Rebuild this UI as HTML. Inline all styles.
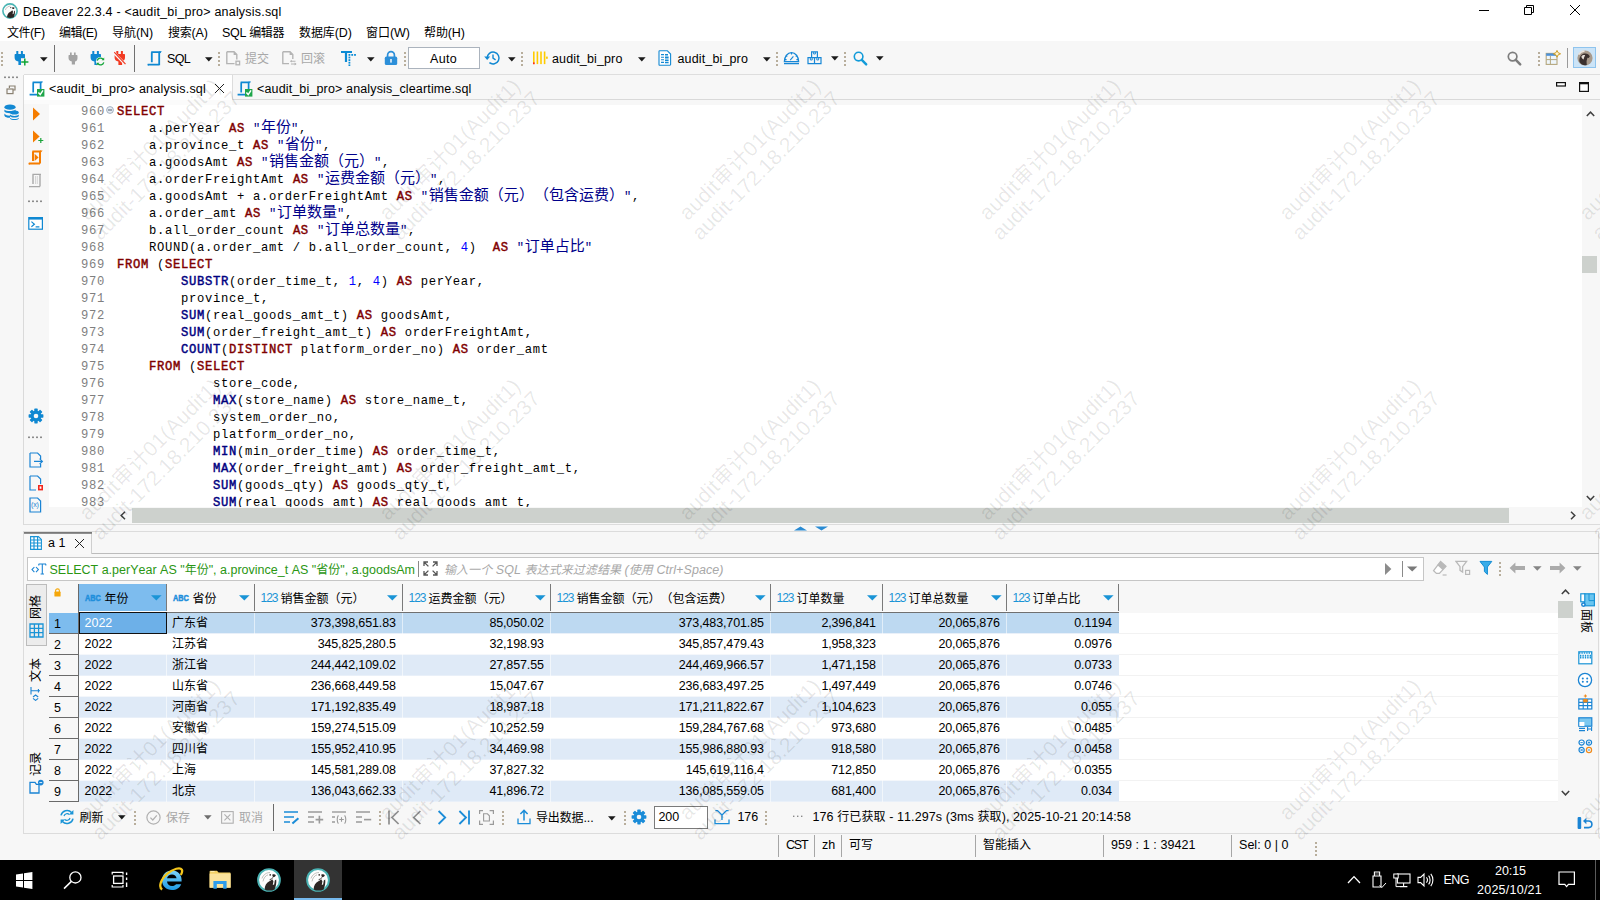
<!DOCTYPE html><html lang="zh"><head><meta charset="utf-8"><title>DBeaver 22.3.4 - &lt;audit_bi_pro&gt; analysis.sql</title><style>
*{margin:0;padding:0;box-sizing:border-box}
html,body{width:1600px;height:900px;overflow:hidden;background:#f7f7f7}
body{font-family:"Liberation Sans","Noto Sans CJK SC",sans-serif;font-size:12.5px;color:#000;position:relative;text-spacing-trim:space-all;font-kerning:none}
.c{font-size:12px}
#r{position:absolute;left:0;top:0;width:1600px;height:900px;overflow:hidden}
#r div,#r span,#r svg{position:absolute}
#r span{white-space:pre;line-height:16px;height:16px}
#r span span,#r span b,#r span i,#r span u,#r span s,#r span em{position:static}
.ui{font-size:12px}
.g{color:#a0a0a0}
.code{font-family:"Liberation Mono","Noto Sans CJK SC",monospace;font-size:12.2px;letter-spacing:0.68px;line-height:17px;height:17px;color:#000}
#r .code{line-height:17px;height:17px}
.code b{font-weight:normal;color:#7f0000;-webkit-text-stroke:0.45px #7f0000}
.code i{font-style:normal;font-weight:normal;color:#000080;-webkit-text-stroke:0.45px #000080}
.code u{text-decoration:none;color:#0000ff}
.code s{text-decoration:none;color:#000080}
.code em{font-style:normal;font-family:"Noto Sans CJK SC",sans-serif;font-size:15px;line-height:10px;position:static;font-weight:normal;color:#00008a}
.code em{letter-spacing:0}
.code em.p{letter-spacing:0}
.ln{font-family:"Liberation Mono",monospace;font-size:12.2px;letter-spacing:0.68px;color:#7f7f7f;text-align:right;width:40px}
#r .ln{line-height:17px;height:17px}
.cell{font-size:12.5px}
.wm{font-family:"Liberation Sans","Noto Sans CJK SC",sans-serif;font-size:21px;color:rgba(0,0,0,0.095);width:260px;height:45px;text-align:center;white-space:pre;transform:rotate(-45deg)}
.wm p{line-height:22.5px;height:22.5px}
</style></head><body><div id="r">
<div style="left:0px;top:0px;width:1600px;height:41px;background:#fff"></div>
<div style="left:0px;top:41px;width:1600px;height:34px;background:#f7f7f7"></div>
<div style="left:24px;top:74px;width:1576px;height:1px;background:#dedede"></div>
<div style="left:0px;top:75px;width:1600px;height:785px;background:#f7f7f7"></div>
<div style="left:24px;top:75px;width:1576px;height:25px;background:#f7f7f7"></div>
<div style="left:24px;top:99px;width:1576px;height:1px;background:#d9d9d9"></div>
<div style="left:23px;top:75px;width:1px;height:455px;background:#dadada"></div>
<svg style="left:2px;top:3px;" width="16" height="16" viewBox="0 0 16 16"><circle cx="8" cy="8" r="7.1" fill="#fdfdfd" stroke="#49b4b3" stroke-width="1.6"/><path d="M5 14.2C5.2 11.6 6.2 10 8 9C9 8.4 9.8 7.8 10.2 7.2L11 8.6L10.6 11.2L11.6 10.8L12 8.2L12.8 7.6C13.2 9.8 12.8 12.4 11.8 14.2C9.8 15.2 7 15.2 5 14.2Z" fill="#2c2624"/><path d="M10.2 4.4C11 4 12.2 4.2 12.6 4.8C12.4 5.6 11.6 6.2 10.8 6C10.2 5.6 10 5 10.2 4.4Z" fill="#2c2624"/><circle cx="8.8" cy="4.6" r="0.6" fill="#2c2624"/><path d="M3.4 7C4.2 4.4 6.4 3 8.6 3" fill="none" stroke="#b9b4b0" stroke-width="0.8"/></svg>
<span style="left:23px;top:4px;letter-spacing:0.205px;">DBeaver 22.3.4 - &lt;audit_bi_pro&gt; analysis.sql</span>
<svg style="left:1478px;top:4px;" width="12" height="12" viewBox="0 0 12 12"><path d="M1 6.5H11" stroke="#000" stroke-width="1"/></svg>
<svg style="left:1523px;top:4px;" width="12" height="12" viewBox="0 0 12 12"><path d="M1.5 3.5H8.5V10.5H1.5Z M3.5 3.5V1.5H10.5V8.5H8.5" fill="none" stroke="#000" stroke-width="1"/></svg>
<svg style="left:1569px;top:4px;" width="12" height="12" viewBox="0 0 12 12"><path d="M1 1L11 11M11 1L1 11" stroke="#000" stroke-width="1"/></svg>
<span style="left:7px;top:25px;letter-spacing:-0.477px;"><span class="c">文件</span>(F)</span>
<span style="left:59px;top:25px;letter-spacing:-0.497px;"><span class="c">编辑</span>(E)</span>
<span style="left:112px;top:25px;letter-spacing:-0.035px;"><span class="c">导航</span>(N)</span>
<span style="left:168px;top:25px;letter-spacing:-0.217px;"><span class="c">搜索</span>(A)</span>
<span style="left:222px;top:25px;letter-spacing:-0.331px;">SQL <span class="c">编辑器</span></span>
<span style="left:299px;top:25px;letter-spacing:-0.096px;"><span class="c">数据库</span>(D)</span>
<span style="left:366px;top:25px;letter-spacing:-0.068px;"><span class="c">窗口</span>(W)</span>
<span style="left:424px;top:25px;letter-spacing:-0.115px;"><span class="c">帮助</span>(H)</span>
<svg style="left:1px;top:51px;" width="2" height="16" viewBox="0 0 2 16"><rect x="0" y="1" width="2" height="2" fill="#b8ae9c"/><rect x="0" y="5" width="2" height="2" fill="#b8ae9c"/><rect x="0" y="9" width="2" height="2" fill="#b8ae9c"/><rect x="0" y="13" width="2" height="2" fill="#b8ae9c"/></svg>
<svg style="left:14px;top:51px;" width="16" height="16" viewBox="0 0 16 16"><path d="M2.3 0H4.3V3H6.9V0H8.9V3H10.3C10.8 3 11 3.3 11 3.8V6.6C11 8.6 9.9 10 8.1 10.6V14H4.4V10.6C1.9 10 0.6 8.4 0.6 6.4V3.8C0.6 3.3 0.8 3 1.3 3H2.3Z" fill="#0f88d2"/><path d="M7 7.2H14.5V14.8H7Z" fill="#f7f7f7"/><path d="M10.8 7.4V14.6M7.2 11H14.4" stroke="#10a637" stroke-width="1.5"/></svg>
<svg style="left:40px;top:57px;" width="8" height="5" viewBox="0 0 8 5"><path d="M0 0.3H7.6L3.8 4.6Z" fill="#1a1a1a"/></svg>
<div style="left:54px;top:45px;width:1px;height:27px;background:#707070"></div>
<svg style="left:68px;top:52px;" width="10" height="13" viewBox="0 0 11.6 14"><path d="M2.3 0H4.3V3H6.9V0H8.9V3H10.3C10.8 3 11 3.3 11 3.8V6.6C11 8.6 9.9 10 8.1 10.6V14H4.4V10.6C1.9 10 0.6 8.4 0.6 6.4V3.8C0.6 3.3 0.8 3 1.3 3H2.3Z" fill="#a3a3a3"/></svg>
<svg style="left:90px;top:51px;" width="16" height="16" viewBox="0 0 16 16"><path d="M2.3 0H4.3V3H6.9V0H8.9V3H10.3C10.8 3 11 3.3 11 3.8V6.6C11 8.6 9.9 10 8.1 10.6V14H4.4V10.6C1.9 10 0.6 8.4 0.6 6.4V3.8C0.6 3.3 0.8 3 1.3 3H2.3Z" fill="#0f88d2"/><circle cx="10.5" cy="10.5" r="4.6" fill="#f7f7f7"/><path d="M7.2 9.6A3.4 3.4 0 0 1 13 8.2M13.8 11.4A3.4 3.4 0 0 1 8 12.8" fill="none" stroke="#12a538" stroke-width="1.3"/><path d="M14.2 6.6V9.2H11.6ZM6.8 14.4V11.8H9.4Z" fill="#12a538"/></svg>
<svg style="left:114px;top:51px;" width="16" height="16" viewBox="0 0 16 16"><path d="M2.3 0H4.3V3H6.9V0H8.9V3H10.3C10.8 3 11 3.3 11 3.8V6.6C11 8.6 9.9 10 8.1 10.6V14H4.4V10.6C1.9 10 0.6 8.4 0.6 6.4V3.8C0.6 3.3 0.8 3 1.3 3H2.3Z" fill="#f23a22"/><path d="M-0.5 1.5L12 14" stroke="#f7f7f7" stroke-width="2.6"/><path d="M0.2 1.2L11.5 13.2" stroke="#f23a22" stroke-width="1.2"/></svg>
<div style="left:134px;top:45px;width:1px;height:27px;background:#707070"></div>
<svg style="left:147px;top:51px;" width="16" height="16" viewBox="0 0 16 16"><path d="M4.2 1.2H13.6M12.2 1.2V14.2M4.8 1.2V11.2M1 13.6H12.2" fill="none" stroke="#0f88d2" stroke-width="1.8"/><path d="M12 0.3H14.8L13.4 2.2Z M0.4 12.6L2 14.6H0.6Z" fill="#0f88d2"/></svg>
<span style="left:167px;top:51px;letter-spacing:-0.672px;">SQL</span>
<svg style="left:205px;top:57px;" width="8" height="5" viewBox="0 0 8 5"><path d="M0 0.3H7.6L3.8 4.6Z" fill="#1a1a1a"/></svg>
<svg style="left:218px;top:51px;" width="2" height="16" viewBox="0 0 2 16"><rect x="0" y="1" width="2" height="2" fill="#b8ae9c"/><rect x="0" y="5" width="2" height="2" fill="#b8ae9c"/><rect x="0" y="9" width="2" height="2" fill="#b8ae9c"/><rect x="0" y="13" width="2" height="2" fill="#b8ae9c"/></svg>
<svg style="left:226px;top:51px;" width="16" height="16" viewBox="0 0 16 16"><path d="M0.8 0.8H8L10.8 3.6V8.5M0.8 0.8V12.6H8.5" fill="none" stroke="#b4b4b4" stroke-width="1.4"/><path d="M7.6 0.6V4H11Z" fill="#b4b4b4"/><rect x="10" y="10.2" width="3.6" height="3.6" fill="none" stroke="#b4b4b4" stroke-width="1.3"/></svg>
<span style="left:245px;top:51px;letter-spacing:-0.008px;color:#a8a8a8"><span class="c">提交</span></span>
<svg style="left:282px;top:51px;" width="16" height="16" viewBox="0 0 16 16"><path d="M0.8 0.8H8L10.8 3.6V8M0.8 0.8V12.6H7" fill="none" stroke="#b4b4b4" stroke-width="1.4"/><path d="M7.6 0.6V4H11Z" fill="#b4b4b4"/><path d="M8.5 10.2H13.5M9 13H14" stroke="#b4b4b4" stroke-width="1.1"/><path d="M9.8 8.8L8 10.2L9.8 11.6ZM12.6 11.6L14.6 13L12.6 14.4Z" fill="#b4b4b4"/></svg>
<span style="left:301px;top:51px;letter-spacing:-0.008px;color:#a8a8a8"><span class="c">回滚</span></span>
<svg style="left:341px;top:50px;" width="16" height="16" viewBox="0 0 16 16"><path d="M0 2H11M5 2V12" stroke="#0c8bd5" stroke-width="2.2" fill="none"/><rect x="7.5" y="4" width="1.8" height="1.8" fill="#0c8bd5"/><rect x="10.3" y="4" width="1.8" height="1.8" fill="#0c8bd5"/><rect x="13.1" y="4" width="1.8" height="1.8" fill="#0c8bd5"/><rect x="7.5" y="6.6" width="1.8" height="1.8" fill="#0c8bd5"/><rect x="7.5" y="9.2" width="1.8" height="1.8" fill="#0c8bd5"/><rect x="7.5" y="11.8" width="1.8" height="1.8" fill="#0c8bd5"/><rect x="7.5" y="14.4" width="1.8" height="1.8" fill="#0c8bd5"/></svg>
<svg style="left:367px;top:57px;" width="8" height="5" viewBox="0 0 8 5"><path d="M0 0.3H7.6L3.8 4.6Z" fill="#1a1a1a"/></svg>
<svg style="left:384px;top:50px;" width="14" height="16" viewBox="0 0 14 16"><path d="M3.6 7V5A3.4 3.4 0 0 1 10.4 5V7" fill="none" stroke="#2c8fd9" stroke-width="1.7"/><rect x="0.8" y="6.6" width="12.4" height="8.4" rx="1.6" fill="#2c8fd9"/><rect x="6.2" y="9" width="1.6" height="3.6" fill="#e8f2fb"/></svg>
<svg style="left:404px;top:51px;" width="2" height="16" viewBox="0 0 2 16"><rect x="0" y="1" width="2" height="2" fill="#b8ae9c"/><rect x="0" y="5" width="2" height="2" fill="#b8ae9c"/><rect x="0" y="9" width="2" height="2" fill="#b8ae9c"/><rect x="0" y="13" width="2" height="2" fill="#b8ae9c"/></svg>
<div style="left:408px;top:47px;width:72px;height:22px;background:#fff;border:1px solid #abb3bd"></div>
<span style="left:430px;top:51px;letter-spacing:0.320px;">Auto</span>
<svg style="left:484px;top:50px;" width="17" height="16" viewBox="0 0 17 16"><path d="M3.2 8A5.9 5.9 0 1 1 5.4 12.6" fill="none" stroke="#1088d2" stroke-width="1.5"/><path d="M0.2 6.6H6.2L3.2 10Z" fill="#1088d2"/><path d="M9 4.4V8.2L11.6 9.8" fill="none" stroke="#1088d2" stroke-width="1.4"/></svg>
<svg style="left:508px;top:57px;" width="8" height="5" viewBox="0 0 8 5"><path d="M0 0.3H7.6L3.8 4.6Z" fill="#1a1a1a"/></svg>
<svg style="left:521px;top:51px;" width="2" height="16" viewBox="0 0 2 16"><rect x="0" y="1" width="2" height="2" fill="#b8ae9c"/><rect x="0" y="5" width="2" height="2" fill="#b8ae9c"/><rect x="0" y="9" width="2" height="2" fill="#b8ae9c"/><rect x="0" y="13" width="2" height="2" fill="#b8ae9c"/></svg>
<svg style="left:533px;top:51px;" width="16" height="14" viewBox="0 0 16 14"><rect x="0" y="0.5" width="1.6" height="12.6" fill="#ffcc00"/><rect x="3.6" y="0.5" width="1.6" height="12.6" fill="#ffcc00"/><rect x="7.2" y="0.5" width="1.6" height="12.6" fill="#ffcc00"/><rect x="10.8" y="0.5" width="1.6" height="12.6" fill="#ffcc00"/><rect x="0" y="11.4" width="1.6" height="1.8" fill="#f22"/><rect x="13" y="5.6" width="1.8" height="2.2" fill="#ffcc00"/></svg>
<span style="left:552px;top:51px;letter-spacing:0.141px;">audit_bi_pro</span>
<svg style="left:638px;top:57px;" width="8" height="5" viewBox="0 0 8 5"><path d="M0 0.3H7.6L3.8 4.6Z" fill="#1a1a1a"/></svg>
<svg style="left:658px;top:50px;" width="14" height="16" viewBox="0 0 14 16"><path d="M1 1.4C1 1 1.2 0.8 1.6 0.8H9.4L12.6 4V14.6C12.6 15 12.4 15.2 12 15.2H1.6C1.2 15.2 1 15 1 14.6Z" fill="#fff" stroke="#1389d3" stroke-width="1.1"/><path d="M3 4.6H6M3 7.2H6M3 9.8H6M3 12.4H6" stroke="#1389d3" stroke-width="1.1"/><path d="M7 4H10V5.4H7ZM7 6.6H10.6V8.6H7ZM7 9.6H10.6V11.2H7ZM7 12H10.6V13.2H7Z" fill="#1389d3"/></svg>
<span style="left:677.5px;top:51px;letter-spacing:0.141px;">audit_bi_pro</span>
<svg style="left:763px;top:57px;" width="8" height="5" viewBox="0 0 8 5"><path d="M0 0.3H7.6L3.8 4.6Z" fill="#1a1a1a"/></svg>
<svg style="left:776px;top:51px;" width="2" height="16" viewBox="0 0 2 16"><rect x="0" y="1" width="2" height="2" fill="#b8ae9c"/><rect x="0" y="5" width="2" height="2" fill="#b8ae9c"/><rect x="0" y="9" width="2" height="2" fill="#b8ae9c"/><rect x="0" y="13" width="2" height="2" fill="#b8ae9c"/></svg>
<svg style="left:783px;top:51px;" width="17" height="14" viewBox="0 0 17 14"><path d="M1.4 10.6A7.1 9 0 0 1 15.6 10.6Z" fill="none" stroke="#1787d6" stroke-width="1.3"/><path d="M1 12.6H16" stroke="#1787d6" stroke-width="1.3"/><path d="M8.5 1.6V3.6M3 4.4L4.2 5.6M14 4.4L12.8 5.6M2 8.6H3.6M13.4 8.6H15M7.2 9.2L10.4 5.4" stroke="#1787d6" stroke-width="1.1"/></svg>
<svg style="left:807px;top:51px;" width="16" height="14" viewBox="0 0 16 14"><path d="M4.6 0.8H10.4V6.6H4.6ZM1 6.6H7.5V12.6H1ZM7.5 6.6H14V12.6H7.5Z" fill="none" stroke="#1787d6" stroke-width="1.2"/><path d="M6.6 1V3H8.4V1M3.4 7V9H5.2V7M9.8 7V9H11.6V7" fill="none" stroke="#1787d6" stroke-width="0.9"/></svg>
<svg style="left:831px;top:56px;" width="8" height="5" viewBox="0 0 8 5"><path d="M0 0.3H7.6L3.8 4.6Z" fill="#1a1a1a"/></svg>
<svg style="left:844px;top:51px;" width="2" height="16" viewBox="0 0 2 16"><rect x="0" y="1" width="2" height="2" fill="#b8ae9c"/><rect x="0" y="5" width="2" height="2" fill="#b8ae9c"/><rect x="0" y="9" width="2" height="2" fill="#b8ae9c"/><rect x="0" y="13" width="2" height="2" fill="#b8ae9c"/></svg>
<svg style="left:853px;top:51px;" width="16" height="16" viewBox="0 0 16 16"><circle cx="5.6" cy="5.6" r="4.3" fill="none" stroke="#129bd9" stroke-width="1.6"/><path d="M8.8 8.8L13.2 13.4" stroke="#129bd9" stroke-width="2.4000000000000004" stroke-linecap="round"/></svg>
<svg style="left:876px;top:56px;" width="8" height="5" viewBox="0 0 8 5"><path d="M0 0.3H7.6L3.8 4.6Z" fill="#1a1a1a"/></svg>
<svg style="left:1507px;top:51px;" width="16" height="16" viewBox="0 0 16 16"><circle cx="5.6" cy="5.6" r="4.3" fill="none" stroke="#7d7d7d" stroke-width="1.7"/><path d="M8.8 8.8L13.2 13.4" stroke="#7d7d7d" stroke-width="2.5" stroke-linecap="round"/></svg>
<svg style="left:1538px;top:51px;" width="2" height="16" viewBox="0 0 2 16"><rect x="0" y="1" width="2" height="2" fill="#b8ae9c"/><rect x="0" y="5" width="2" height="2" fill="#b8ae9c"/><rect x="0" y="9" width="2" height="2" fill="#b8ae9c"/><rect x="0" y="13" width="2" height="2" fill="#b8ae9c"/></svg>
<svg style="left:1545px;top:50px;" width="16" height="16" viewBox="0 0 16 16"><rect x="1.2" y="3.4" width="10.8" height="11" fill="#eef6fc" stroke="#b5a77e" stroke-width="1.1"/><rect x="1.2" y="3.4" width="10.8" height="2.4" fill="#4a90d9"/><path d="M1.2 9.6H12M5.4 5.8V14.4" stroke="#b5a77e" stroke-width="1"/><path d="M12 0.4L13.1 2.7L15.6 3.8L13.1 4.9L12 7.2L10.9 4.9L8.4 3.8L10.9 2.7Z" fill="#fff6cf" stroke="#c8961a" stroke-width="0.9"/></svg>
<div style="left:1567px;top:48px;width:1px;height:20px;background:#9a9a9a"></div>
<div style="left:1573px;top:47px;width:23px;height:21px;background:#cce4f7;border:1px solid #8fc4ee"></div>
<svg style="left:1577px;top:50px;" width="16" height="16" viewBox="0 0 16 16"><circle cx="8" cy="8" r="7.6" fill="#a89a8c"/><path d="M2.5 12C1.8 8 3.8 4.2 7.4 3.6C10 3.2 12 4.6 12.8 6.4L11.6 8L10.4 7.8C10.2 9.4 9.4 10.6 9.6 12.4L9.8 15C7 16 4 14.6 2.5 12Z" fill="#3a302e"/><path d="M4.4 6.6C5.4 5 7 4.8 8.2 5.2C7.4 6.4 6.8 8 6.6 9.6C5.4 9 4.4 8 4.4 6.6Z" fill="#e4ddd6"/><path d="M1.6 4.6C3 2.4 5 1.2 7.6 1" stroke="#e9e4df" stroke-width="1.6" fill="none"/></svg>
<svg style="left:4px;top:76px;" width="16" height="3" viewBox="0 0 16 3"><rect x="0" y="0.5" width="2" height="1.6" fill="#8c8c8c"/><rect x="4" y="0.5" width="2" height="1.6" fill="#8c8c8c"/><rect x="8" y="0.5" width="2" height="1.6" fill="#8c8c8c"/><rect x="12" y="0.5" width="2" height="1.6" fill="#8c8c8c"/></svg>
<svg style="left:6px;top:85px;" width="10" height="10" viewBox="0 0 10 10"><path d="M3.4 3V1H9V5H7" fill="none" stroke="#8a8172" stroke-width="1.2"/><rect x="1" y="4" width="6" height="4.6" fill="#f7f7f7" stroke="#8a8172" stroke-width="1.2"/></svg>
<div style="left:24px;top:75px;width:209px;height:29px;background:#fff"></div>
<div style="left:232px;top:75px;width:1px;height:25px;background:#dcdcdc"></div>
<div style="left:24px;top:100px;width:1576px;height:4px;background:#f7f7f7"></div>
<div style="left:24px;top:100px;width:208px;height:5px;background:#fbfbfb"></div>
<svg style="left:29px;top:81px;" width="16" height="16" viewBox="0 0 16 16"><path d="M3.6 1.4H12.6M11.6 1.4V8M4.2 1.4V11.6M0.6 13.6H8" fill="none" stroke="#0f88d2" stroke-width="1.7"/><path d="M11.4 0.4H14L12.8 2.2Z" fill="#0f88d2"/><rect x="8" y="8" width="7.4" height="7.6" fill="#1fa64a"/><path d="M9.4 11.6L11.2 13.6L14 9.4" fill="none" stroke="#fff" stroke-width="1.5"/></svg>
<span style="left:49px;top:81px;letter-spacing:0.204px;">&lt;audit_bi_pro&gt; analysis.sql</span>
<svg style="left:214px;top:83px;" width="11" height="11" viewBox="0 0 11 11"><path d="M1 1L10 10M10 1L1 10" stroke="#222" stroke-width="1"/></svg>
<svg style="left:237px;top:81px;" width="16" height="16" viewBox="0 0 16 16"><path d="M3.6 1.4H12.6M11.6 1.4V8M4.2 1.4V11.6M0.6 13.6H8" fill="none" stroke="#0f88d2" stroke-width="1.7"/><path d="M11.4 0.4H14L12.8 2.2Z" fill="#0f88d2"/><rect x="8" y="8" width="7.4" height="7.6" fill="#1fa64a"/><path d="M9.4 11.6L11.2 13.6L14 9.4" fill="none" stroke="#fff" stroke-width="1.5"/></svg>
<span style="left:257px;top:81px;letter-spacing:0.144px;">&lt;audit_bi_pro&gt; analysis_cleartime.sql</span>
<svg style="left:1556px;top:82px;" width="11" height="6" viewBox="0 0 11 6"><rect x="0.6" y="0.6" width="8.8" height="3.4" fill="#fff" stroke="#111" stroke-width="1.2"/></svg>
<svg style="left:1579px;top:82px;" width="11" height="11" viewBox="0 0 11 11"><rect x="0.6" y="0.6" width="8.8" height="8.8" fill="#fff" stroke="#111" stroke-width="1.2"/><path d="M0.6 1.6H9.4" stroke="#111" stroke-width="1.4"/></svg>
<svg style="left:3px;top:104px;" width="17" height="16" viewBox="0 0 17 16"><g fill="#1389d3"><ellipse cx="7" cy="3.2" rx="5.6" ry="2.6"/><path d="M1.4 5.6C2.6 7.6 11.4 7.6 12.6 5.6V7.6C11.4 9.8 2.6 9.8 1.4 7.6Z"/><path d="M1.4 9.6C2.6 11.6 6 11.8 7 11.6V13.8C5 14 2.2 13.4 1.4 11.8Z"/><ellipse cx="11.4" cy="8.6" rx="4.4" ry="2"/><path d="M7 10.6C8 12.4 14.8 12.4 15.8 10.6V12.2C14.8 14 8 14 7 12.2Z"/><path d="M7 13.8C8 15.4 14.8 15.4 15.8 13.8V14.6C14.8 16.6 8 16.6 7 14.6Z"/></g></svg>
<div style="left:49px;top:105px;width:1533px;height:402px;background:#fff"></div>
<div style="left:24px;top:104px;width:25px;height:421px;background:#f7f7f7"></div>
<svg style="left:32px;top:107px;" width="10" height="14" viewBox="0 0 10 14"><path d="M1 0.6L8 7L1 13.4Z" fill="#f57c00"/></svg>
<svg style="left:32px;top:130px;" width="12" height="14" viewBox="0 0 12 14"><path d="M1 0.6L7.6 6.6L1 12.6Z" fill="#f57c00"/><path d="M8.8 8V13M6.3 10.5H11.3" stroke="#1aa33a" stroke-width="1.2"/></svg>
<svg style="left:28px;top:150px;" width="16" height="16" viewBox="0 0 16 16"><path d="M4.4 1.4H13M12 1.4V13.6M5 1.4V11M1 13.6H12" fill="none" stroke="#f57c00" stroke-width="2"/><path d="M6.6 3.8L10.6 7.4L6.6 11Z" fill="#f57c00"/><path d="M0.4 12.6L2 14.6H0.6ZM11.8 0.4H14.6L13.2 2.2Z" fill="#f57c00"/></svg>
<svg style="left:28px;top:173px;" width="16" height="16" viewBox="0 0 16 16"><path d="M4.4 1.4H13M12 1.4V13.6M5 1.4V11M1 13.6H12" fill="none" stroke="#a9a9a9" stroke-width="1.4"/><path d="M7 4H10.4M7 6H10.4M7 8H10.4M7 10H10.4" stroke="#a9a9a9" stroke-width="0.9" stroke-dasharray="1 0.8"/></svg>
<svg style="left:28px;top:200px;" width="16" height="3" viewBox="0 0 16 3"><rect x="0" y="0.5" width="2" height="1.6" fill="#8c8c8c"/><rect x="4" y="0.5" width="2" height="1.6" fill="#8c8c8c"/><rect x="8" y="0.5" width="2" height="1.6" fill="#8c8c8c"/><rect x="12" y="0.5" width="2" height="1.6" fill="#8c8c8c"/></svg>
<svg style="left:28px;top:216px;" width="16" height="16" viewBox="0 0 16 16"><rect x="0.8" y="1.6" width="13.6" height="11.6" fill="#fff" stroke="#0f88d2" stroke-width="1.2"/><path d="M1 2.6H14.2" stroke="#0f88d2" stroke-width="2"/><path d="M3.4 5.6L6.4 8.2L3.4 10.8M7.6 10.8H11.4" fill="none" stroke="#0f88d2" stroke-width="1.2"/></svg>
<svg style="left:28px;top:408px;" width="16" height="16" viewBox="0 0 16 16"><g transform="translate(8 8)"><rect x="-1.7" y="-7.4" width="3.4" height="4" rx="0.6" transform="rotate(0)" fill="#0f88d2"/><rect x="-1.7" y="-7.4" width="3.4" height="4" rx="0.6" transform="rotate(45)" fill="#0f88d2"/><rect x="-1.7" y="-7.4" width="3.4" height="4" rx="0.6" transform="rotate(90)" fill="#0f88d2"/><rect x="-1.7" y="-7.4" width="3.4" height="4" rx="0.6" transform="rotate(135)" fill="#0f88d2"/><rect x="-1.7" y="-7.4" width="3.4" height="4" rx="0.6" transform="rotate(180)" fill="#0f88d2"/><rect x="-1.7" y="-7.4" width="3.4" height="4" rx="0.6" transform="rotate(225)" fill="#0f88d2"/><rect x="-1.7" y="-7.4" width="3.4" height="4" rx="0.6" transform="rotate(270)" fill="#0f88d2"/><rect x="-1.7" y="-7.4" width="3.4" height="4" rx="0.6" transform="rotate(315)" fill="#0f88d2"/><circle r="5.4" fill="#0f88d2"/><circle r="2.3" fill="#f7f7f7"/></g></svg>
<svg style="left:28px;top:436px;" width="16" height="3" viewBox="0 0 16 3"><rect x="0" y="0.5" width="2" height="1.6" fill="#8c8c8c"/><rect x="4" y="0.5" width="2" height="1.6" fill="#8c8c8c"/><rect x="8" y="0.5" width="2" height="1.6" fill="#8c8c8c"/><rect x="12" y="0.5" width="2" height="1.6" fill="#8c8c8c"/></svg>
<svg style="left:29px;top:452px;" width="16" height="16" viewBox="0 0 16 16"><path d="M1 1H8.6L11.6 4V7M11.6 12V15H1V1" fill="none" stroke="#1a84d4" stroke-width="1.2"/><path d="M5 9.4H13M10.6 6.6L13.4 9.4L10.6 12.2" fill="none" stroke="#1a84d4" stroke-width="1.2"/></svg>
<svg style="left:29px;top:475px;" width="16" height="16" viewBox="0 0 16 16"><path d="M1 1H8.6L11.6 4V9M7 15H1V1" fill="none" stroke="#1a84d4" stroke-width="1.2"/><rect x="9" y="10" width="5" height="5.4" fill="#f2261c"/><rect x="10.6" y="11.4" width="1.8" height="2.4" fill="#fff"/></svg>
<svg style="left:29px;top:497px;" width="16" height="16" viewBox="0 0 16 16"><path d="M1 1H8.6L11.6 4V15H1Z" fill="none" stroke="#1a84d4" stroke-width="1.2"/></svg>
<span style="left:31px;top:500px;font-size:7px;color:#1a84d4;line-height:10px;height:10px;letter-spacing:-0.2px">(x)</span>
<div style="left:24px;top:100px;width:1558px;height:407px;overflow:hidden">
<span class="ln" style="left:41px;top:4px">960</span>
<span class="code" style="left:93px;top:4px"><b>SELECT</b></span>
<span class="ln" style="left:41px;top:21px">961</span>
<span class="code" style="left:93px;top:21px">    a.perYear <b>AS</b> <s>&quot;<em>年</em><em>份</em>&quot;</s>,</span>
<span class="ln" style="left:41px;top:38px">962</span>
<span class="code" style="left:93px;top:38px">    a.province_t <b>AS</b> <s>&quot;<em>省</em><em>份</em>&quot;</s>,</span>
<span class="ln" style="left:41px;top:55px">963</span>
<span class="code" style="left:93px;top:55px">    a.goodsAmt <b>AS</b> <s>&quot;<em>销</em><em>售</em><em>金</em><em>额</em><em class="p">（</em><em>元</em><em class="p">）</em>&quot;</s>,</span>
<span class="ln" style="left:41px;top:72px">964</span>
<span class="code" style="left:93px;top:72px">    a.orderFreightAmt <b>AS</b> <s>&quot;<em>运</em><em>费</em><em>金</em><em>额</em><em class="p">（</em><em>元</em><em class="p">）</em>&quot;</s>,</span>
<span class="ln" style="left:41px;top:89px">965</span>
<span class="code" style="left:93px;top:89px">    a.goodsAmt + a.orderFreightAmt <b>AS</b> <s>&quot;<em>销</em><em>售</em><em>金</em><em>额</em><em class="p">（</em><em>元</em><em class="p">）</em><em class="p">（</em><em>包</em><em>含</em><em>运</em><em>费</em><em class="p">）</em>&quot;</s>,</span>
<span class="ln" style="left:41px;top:106px">966</span>
<span class="code" style="left:93px;top:106px">    a.order_amt <b>AS</b> <s>&quot;<em>订</em><em>单</em><em>数</em><em>量</em>&quot;</s>,</span>
<span class="ln" style="left:41px;top:123px">967</span>
<span class="code" style="left:93px;top:123px">    b.all_order_count <b>AS</b> <s>&quot;<em>订</em><em>单</em><em>总</em><em>数</em><em>量</em>&quot;</s>,</span>
<span class="ln" style="left:41px;top:140px">968</span>
<span class="code" style="left:93px;top:140px">    ROUND(a.order_amt / b.all_order_count, <u>4</u>)  <b>AS</b> <s>&quot;<em>订</em><em>单</em><em>占</em><em>比</em>&quot;</s></span>
<span class="ln" style="left:41px;top:157px">969</span>
<span class="code" style="left:93px;top:157px"><b>FROM</b> (<b>SELECT</b></span>
<span class="ln" style="left:41px;top:174px">970</span>
<span class="code" style="left:93px;top:174px">        <i>SUBSTR</i>(order_time_t, <u>1</u>, <u>4</u>) <b>AS</b> perYear,</span>
<span class="ln" style="left:41px;top:191px">971</span>
<span class="code" style="left:93px;top:191px">        province_t,</span>
<span class="ln" style="left:41px;top:208px">972</span>
<span class="code" style="left:93px;top:208px">        <i>SUM</i>(real_goods_amt_t) <b>AS</b> goodsAmt,</span>
<span class="ln" style="left:41px;top:225px">973</span>
<span class="code" style="left:93px;top:225px">        <i>SUM</i>(order_freight_amt_t) <b>AS</b> orderFreightAmt,</span>
<span class="ln" style="left:41px;top:242px">974</span>
<span class="code" style="left:93px;top:242px">        <i>COUNT</i>(<b>DISTINCT</b> platform_order_no) <b>AS</b> order_amt</span>
<span class="ln" style="left:41px;top:259px">975</span>
<span class="code" style="left:93px;top:259px">    <b>FROM</b> (<b>SELECT</b></span>
<span class="ln" style="left:41px;top:276px">976</span>
<span class="code" style="left:93px;top:276px">            store_code,</span>
<span class="ln" style="left:41px;top:293px">977</span>
<span class="code" style="left:93px;top:293px">            <i>MAX</i>(store_name) <b>AS</b> store_name_t,</span>
<span class="ln" style="left:41px;top:310px">978</span>
<span class="code" style="left:93px;top:310px">            system_order_no,</span>
<span class="ln" style="left:41px;top:327px">979</span>
<span class="code" style="left:93px;top:327px">            platform_order_no,</span>
<span class="ln" style="left:41px;top:344px">980</span>
<span class="code" style="left:93px;top:344px">            <i>MIN</i>(min_order_time) <b>AS</b> order_time_t,</span>
<span class="ln" style="left:41px;top:361px">981</span>
<span class="code" style="left:93px;top:361px">            <i>MAX</i>(order_freight_amt) <b>AS</b> order_freight_amt_t,</span>
<span class="ln" style="left:41px;top:378px">982</span>
<span class="code" style="left:93px;top:378px">            <i>SUM</i>(goods_qty) <b>AS</b> goods_qty_t,</span>
<span class="ln" style="left:41px;top:395px">983</span>
<span class="code" style="left:93px;top:395px">            <i>SUM</i>(real_goods_amt) <b>AS</b> real_goods_amt_t,</span>
</div>
<svg style="left:106px;top:106px;" width="8" height="8" viewBox="0 0 8 8"><circle cx="4" cy="4" r="3.4" fill="#e6edf5" stroke="#9aa7b8" stroke-width="0.9"/><path d="M2 4H6" stroke="#55606e" stroke-width="1"/></svg>
<div style="left:1582px;top:104px;width:17px;height:403px;background:#f7f7f7"></div>
<svg style="left:1586px;top:111px;" width="9" height="6" viewBox="0 0 9 6"><path d="M0.8 5L4.5 1.2L8.2 5" fill="none" stroke="#404040" stroke-width="1.5"/></svg>
<svg style="left:1586px;top:495px;" width="9" height="6" viewBox="0 0 9 6"><path d="M0.8 1L4.5 4.8L8.2 1" fill="none" stroke="#404040" stroke-width="1.5"/></svg>
<div style="left:1582px;top:256px;width:15px;height:17px;background:#cdd1cd"></div>
<div style="left:49px;top:507px;width:1550px;height:18px;background:#f7f7f7"></div>
<svg style="left:120px;top:511px;" width="6" height="9" viewBox="0 0 6 9"><path d="M5 0.8L1.2 4.5L5 8.2" fill="none" stroke="#404040" stroke-width="1.5"/></svg>
<svg style="left:1570px;top:511px;" width="6" height="9" viewBox="0 0 6 9"><path d="M1 0.8L4.8 4.5L1 8.2" fill="none" stroke="#404040" stroke-width="1.5"/></svg>
<div style="left:132px;top:508px;width:1377px;height:15px;background:#cdd1cd"></div>
<div style="left:24px;top:524px;width:1576px;height:1px;background:#dcdcdc"></div>
<div style="left:0px;top:525px;width:1600px;height:6px;background:#f7f7f7"></div>
<svg style="left:794px;top:526px;" width="35" height="5" viewBox="0 0 35 5"><path d="M0 4.6L6.5 0.4L13 4.6ZM21 0.4L27.5 4.6L34 0.4Z" fill="#2a8bd3"/></svg>
<div style="left:23px;top:531px;width:1576px;height:303px;background:#f7f7f7;border:1px solid #dcdcdc"></div>
<div style="left:24px;top:532px;width:68px;height:22px;background:#f8f8f8;border-right:1px solid #cfcfcf"></div>
<div style="left:24px;top:532px;width:68px;height:2px;background:linear-gradient(#6e6e6e,#9a9a9a)"></div>
<div style="left:92px;top:553px;width:1507px;height:1px;background:#bcbcbc"></div>
<svg style="left:30px;top:536px;" width="12" height="14" viewBox="0 0 12 14"><path d="M0.6 0.6H8.4L11.4 3.6V13.4H0.6Z" fill="#fff" stroke="#1a94d6" stroke-width="1.1"/><path d="M0.6 4H11.4M0.6 7H11.4M0.6 10H11.4M4 0.6V13.4M7.6 0.6V13.4" stroke="#1a94d6" stroke-width="1.2"/></svg>
<span style="left:48px;top:535px;letter-spacing:0.036px;">a 1</span>
<svg style="left:74px;top:538px;" width="11" height="11" viewBox="0 0 11 11"><path d="M1 1L10 10M10 1L1 10" stroke="#222" stroke-width="1"/></svg>
<div style="left:27px;top:557px;width:1397px;height:24px;background:#fff;border:1px solid #c6c6c6"></div>
<svg style="left:31px;top:563px;" width="16" height="12" viewBox="0 0 16 12"><path d="M3.4 4L1 6.6L3.4 9.2M5 4L7.4 6.6L5 9.2" fill="none" stroke="#1a84d4" stroke-width="1.1"/><path d="M7.6 1H15M11.3 1V11M9.6 11H13M7.8 1V2.6M14.8 1V2.6" fill="none" stroke="#1a84d4" stroke-width="1.1"/></svg>
<span style="left:49.5px;top:562px;letter-spacing:0.004px;color:#2a9613">SELECT a.perYear AS "<span class="c">年份</span>", a.province_t AS "<span class="c">省份</span>", a.goodsAm</span>
<div style="left:418px;top:561px;width:1px;height:16px;background:#8a8a8a"></div>
<svg style="left:423px;top:561px;" width="16" height="15" viewBox="0 0 16 15"><path d="M1 5V1H5M1 1L5.4 5.4M10 1H14V5M14 1L9.6 5.4M1 10V14H5M1 14L5.4 9.6M14 10V14H10M14 14L9.6 9.6" fill="none" stroke="#555" stroke-width="1.3"/></svg>
<span style="left:444px;top:562px;letter-spacing:0.061px;color:#a8a8a8;font-style:italic"><span class="c">输入一个</span> SQL <span class="c">表达式来过滤结果</span> (<span class="c">使用</span> Ctrl+Space)</span>
<svg style="left:1384px;top:562px;" width="9" height="14" viewBox="0 0 9 14"><path d="M1 1L7.4 7L1 13Z" fill="#8c8c8c"/></svg>
<div style="left:1402px;top:561px;width:1px;height:16px;background:#8a8a8a"></div>
<svg style="left:1407px;top:566px;" width="11" height="6" viewBox="0 0 11 6"><path d="M0 0.4H10.4L5.2 5.6Z" fill="#7a7a7a"/></svg>
<svg style="left:1432px;top:560px;" width="16" height="16" viewBox="0 0 16 16"><path d="M8.6 1.4L14 6.4L7.4 13.4H4.4L1.6 10.6Z" fill="#fff" stroke="#b9b9b9" stroke-width="1.3"/><path d="M8.6 1.4L14 6.4L10.6 10L5.2 5Z" fill="#b9b9b9"/><path d="M10.6 15H14.6" stroke="#b9b9b9" stroke-width="1.2"/></svg>
<svg style="left:1455px;top:560px;" width="16" height="16" viewBox="0 0 16 16"><path d="M1 1.4H11.6L7.6 6.6V12L5 10.4V6.6Z" fill="none" stroke="#b9b9b9" stroke-width="1.3"/><rect x="10.6" y="10.4" width="4" height="4" fill="none" stroke="#b9b9b9" stroke-width="1.2"/></svg>
<svg style="left:1479px;top:560px;" width="14" height="16" viewBox="0 0 14 16"><path d="M1 1.4H12.8L8.4 7V14.4L5.4 11.6V7Z" fill="#39ace8" stroke="#128cd4" stroke-width="1"/></svg>
<svg style="left:1499px;top:561px;" width="2" height="16" viewBox="0 0 2 16"><rect x="0" y="1" width="2" height="2" fill="#b8ae9c"/><rect x="0" y="5" width="2" height="2" fill="#b8ae9c"/><rect x="0" y="9" width="2" height="2" fill="#b8ae9c"/><rect x="0" y="13" width="2" height="2" fill="#b8ae9c"/></svg>
<svg style="left:1509px;top:562px;" width="17" height="12" viewBox="0 0 17 12"><path d="M6.4 0.6L0.6 6L6.4 11.4V8H16V4H6.4Z" fill="#ababab"/></svg>
<svg style="left:1533px;top:566px;" width="9" height="5" viewBox="0 0 9 5"><path d="M0 0.3H8.6L4.3 4.8Z" fill="#858585"/></svg>
<svg style="left:1549px;top:562px;" width="17" height="12" viewBox="0 0 17 12"><path d="M10.6 0.6L16.4 6L10.6 11.4V8H1V4H10.6Z" fill="#ababab"/></svg>
<svg style="left:1573px;top:566px;" width="9" height="5" viewBox="0 0 9 5"><path d="M0 0.3H8.6L4.3 4.8Z" fill="#858585"/></svg>
<div style="left:26px;top:584px;width:21px;height:62px;background:#ececec;border:1px solid #bcbcbc"></div>
<span style="left:29px;top:619px;transform-origin:0 0;transform:rotate(-90deg);font-size:12px;line-height:14px;height:14px">网格</span>
<svg style="left:29px;top:623px;" width="15" height="15" viewBox="0 0 15 15"><path d="M1 1H14V14H1ZM1 5.4H14M1 9.6H14M5.4 1V14M9.6 1V14" fill="none" stroke="#1a94d6" stroke-width="1.3"/></svg>
<span style="left:29px;top:682px;transform-origin:0 0;transform:rotate(-90deg);font-size:12px;line-height:14px;height:14px">文本</span>
<svg style="left:30px;top:686px;" width="12" height="15" viewBox="0 0 12 15"><path d="M1 1V8.6M1 4.8H10M8.4 3V6.6" fill="none" stroke="#1a84d4" stroke-width="1.1" transform="translate(0 0)"/><path d="M3 11L5.6 9L8.2 11M3 12.4L5.6 14.4L8.2 12.4" fill="none" stroke="#1a84d4" stroke-width="1.1"/></svg>
<span style="left:29px;top:776px;transform-origin:0 0;transform:rotate(-90deg);font-size:12px;line-height:14px;height:14px">记录</span>
<svg style="left:29px;top:779px;" width="16" height="15" viewBox="0 0 16 15"><path d="M1 14V3.4H6L7.4 5.4H10V14Z" fill="none" stroke="#1a84d4" stroke-width="1.3"/><circle cx="11.8" cy="3.6" r="2.8" fill="#1a84d4"/><path d="M10.4 3.6H13.2" stroke="#fff" stroke-width="0.9"/></svg>
<div style="left:49px;top:613px;width:1509px;height:189px;background:#fff"></div>
<div style="left:79px;top:613px;width:1040px;height:20px;background:#bdd9f1"></div>
<div style="left:79px;top:633px;width:1040px;height:1px;background:#e9f0f9"></div>
<div style="left:1119px;top:633px;width:439px;height:1px;background:#f2f2f2"></div>
<div style="left:79px;top:654px;width:1040px;height:1px;background:#f4f7fb"></div>
<div style="left:1119px;top:654px;width:439px;height:1px;background:#f2f2f2"></div>
<div style="left:79px;top:655px;width:1040px;height:20px;background:#dfeaf7"></div>
<div style="left:79px;top:675px;width:1040px;height:1px;background:#e9f0f9"></div>
<div style="left:1119px;top:675px;width:439px;height:1px;background:#f2f2f2"></div>
<div style="left:79px;top:696px;width:1040px;height:1px;background:#f4f7fb"></div>
<div style="left:1119px;top:696px;width:439px;height:1px;background:#f2f2f2"></div>
<div style="left:79px;top:697px;width:1040px;height:20px;background:#dfeaf7"></div>
<div style="left:79px;top:717px;width:1040px;height:1px;background:#e9f0f9"></div>
<div style="left:1119px;top:717px;width:439px;height:1px;background:#f2f2f2"></div>
<div style="left:79px;top:738px;width:1040px;height:1px;background:#f4f7fb"></div>
<div style="left:1119px;top:738px;width:439px;height:1px;background:#f2f2f2"></div>
<div style="left:79px;top:739px;width:1040px;height:20px;background:#dfeaf7"></div>
<div style="left:79px;top:759px;width:1040px;height:1px;background:#e9f0f9"></div>
<div style="left:1119px;top:759px;width:439px;height:1px;background:#f2f2f2"></div>
<div style="left:79px;top:780px;width:1040px;height:1px;background:#f4f7fb"></div>
<div style="left:1119px;top:780px;width:439px;height:1px;background:#f2f2f2"></div>
<div style="left:79px;top:781px;width:1040px;height:20px;background:#dfeaf7"></div>
<div style="left:79px;top:801px;width:1040px;height:1px;background:#e9f0f9"></div>
<div style="left:1119px;top:801px;width:439px;height:1px;background:#f2f2f2"></div>
<div style="left:166px;top:613px;width:1px;height:189px;background:rgba(255,255,255,0.55)"></div>
<div style="left:254px;top:613px;width:1px;height:189px;background:rgba(255,255,255,0.55)"></div>
<div style="left:402px;top:613px;width:1px;height:189px;background:rgba(255,255,255,0.55)"></div>
<div style="left:550px;top:613px;width:1px;height:189px;background:rgba(255,255,255,0.55)"></div>
<div style="left:770px;top:613px;width:1px;height:189px;background:rgba(255,255,255,0.55)"></div>
<div style="left:882px;top:613px;width:1px;height:189px;background:rgba(255,255,255,0.55)"></div>
<div style="left:1006px;top:613px;width:1px;height:189px;background:rgba(255,255,255,0.55)"></div>
<div style="left:79px;top:584px;width:88px;height:28px;background:#7dbcee"></div>
<div style="left:166px;top:584px;width:1px;height:29px;background:#7a7a7a"></div>
<div style="left:254px;top:584px;width:1px;height:29px;background:#7a7a7a"></div>
<div style="left:402px;top:584px;width:1px;height:29px;background:#7a7a7a"></div>
<div style="left:550px;top:584px;width:1px;height:29px;background:#7a7a7a"></div>
<div style="left:770px;top:584px;width:1px;height:29px;background:#7a7a7a"></div>
<div style="left:882px;top:584px;width:1px;height:29px;background:#7a7a7a"></div>
<div style="left:1006px;top:584px;width:1px;height:29px;background:#7a7a7a"></div>
<div style="left:1118px;top:584px;width:1px;height:29px;background:#7a7a7a"></div>
<div style="left:79px;top:611px;width:1040px;height:1px;background:#fcfcfc"></div>
<div style="left:79px;top:612px;width:1040px;height:1px;background:#707070"></div>
<svg style="left:54px;top:588px;" width="7" height="9" viewBox="0 0 7 9"><path d="M1.6 4V2.8A1.9 1.9 0 0 1 5.4 2.8V4" fill="none" stroke="#f5a70a" stroke-width="1.1"/><rect x="0.4" y="3.6" width="6.2" height="5" rx="0.6" fill="#f5a70a"/></svg>
<svg style="left:84px;top:592px;" width="19" height="11" viewBox="0 0 19 11"><text x="0.9" y="9" font-family="Liberation Sans,sans-serif" font-size="9.8" font-weight="bold" fill="#1f8fdc" stroke="#1f8fdc" stroke-width="0.55" textLength="15.8" lengthAdjust="spacingAndGlyphs">ABC</text></svg>
<span style="left:104.5px;top:591px;letter-spacing:-0.008px;"><span class="c">年份</span></span>
<svg style="left:151px;top:595px;" width="11" height="6" viewBox="0 0 11 6"><path d="M0 0.2H10.6L5.3 5.6Z" fill="#1a94d6"/></svg>
<svg style="left:172px;top:592px;" width="19" height="11" viewBox="0 0 19 11"><text x="0.9" y="9" font-family="Liberation Sans,sans-serif" font-size="9.8" font-weight="bold" fill="#1f8fdc" stroke="#1f8fdc" stroke-width="0.55" textLength="15.8" lengthAdjust="spacingAndGlyphs">ABC</text></svg>
<span style="left:192.5px;top:591px;letter-spacing:-0.008px;"><span class="c">省份</span></span>
<svg style="left:239px;top:595px;" width="11" height="6" viewBox="0 0 11 6"><path d="M0 0.2H10.6L5.3 5.6Z" fill="#1a94d6"/></svg>
<span style="left:260.5px;top:590px;letter-spacing:-1.010px;color:#1a94d6;font-size:12px">123</span>
<span style="left:280.5px;top:591px;letter-spacing:-0.002px;"><span class="c">销售金额（元）</span></span>
<svg style="left:387px;top:595px;" width="11" height="6" viewBox="0 0 11 6"><path d="M0 0.2H10.6L5.3 5.6Z" fill="#1a94d6"/></svg>
<span style="left:408.5px;top:590px;letter-spacing:-1.010px;color:#1a94d6;font-size:12px">123</span>
<span style="left:428.5px;top:591px;letter-spacing:-0.002px;"><span class="c">运费金额（元）</span></span>
<svg style="left:535px;top:595px;" width="11" height="6" viewBox="0 0 11 6"><path d="M0 0.2H10.6L5.3 5.6Z" fill="#1a94d6"/></svg>
<span style="left:556.5px;top:590px;letter-spacing:-1.010px;color:#1a94d6;font-size:12px">123</span>
<span style="left:576.5px;top:591px;letter-spacing:-0.001px;"><span class="c">销售金额（元）（包含运费）</span></span>
<svg style="left:755px;top:595px;" width="11" height="6" viewBox="0 0 11 6"><path d="M0 0.2H10.6L5.3 5.6Z" fill="#1a94d6"/></svg>
<span style="left:776.5px;top:590px;letter-spacing:-1.010px;color:#1a94d6;font-size:12px">123</span>
<span style="left:796.5px;top:591px;letter-spacing:-0.004px;"><span class="c">订单数量</span></span>
<svg style="left:867px;top:595px;" width="11" height="6" viewBox="0 0 11 6"><path d="M0 0.2H10.6L5.3 5.6Z" fill="#1a94d6"/></svg>
<span style="left:888.5px;top:590px;letter-spacing:-1.010px;color:#1a94d6;font-size:12px">123</span>
<span style="left:908.5px;top:591px;letter-spacing:-0.003px;"><span class="c">订单总数量</span></span>
<svg style="left:991px;top:595px;" width="11" height="6" viewBox="0 0 11 6"><path d="M0 0.2H10.6L5.3 5.6Z" fill="#1a94d6"/></svg>
<span style="left:1012.5px;top:590px;letter-spacing:-1.010px;color:#1a94d6;font-size:12px">123</span>
<span style="left:1032.5px;top:591px;letter-spacing:-0.004px;"><span class="c">订单占比</span></span>
<svg style="left:1103px;top:595px;" width="11" height="6" viewBox="0 0 11 6"><path d="M0 0.2H10.6L5.3 5.6Z" fill="#1a94d6"/></svg>
<div style="left:49px;top:613px;width:29px;height:189px;background:#f7f7f7"></div>
<div style="left:49px;top:613px;width:29px;height:20px;background:#7dbcee"></div>
<div style="left:78px;top:584px;width:1px;height:218px;background:#6a6a6a"></div>
<div style="left:49px;top:633px;width:30px;height:1px;background:#6a6a6a"></div>
<span style="left:54px;top:616px;font-size:12.5px">1</span>
<div style="left:49px;top:654px;width:30px;height:1px;background:#6a6a6a"></div>
<span style="left:54px;top:637px;font-size:12.5px">2</span>
<div style="left:49px;top:675px;width:30px;height:1px;background:#6a6a6a"></div>
<span style="left:54px;top:658px;font-size:12.5px">3</span>
<div style="left:49px;top:696px;width:30px;height:1px;background:#6a6a6a"></div>
<span style="left:54px;top:679px;font-size:12.5px">4</span>
<div style="left:49px;top:717px;width:30px;height:1px;background:#6a6a6a"></div>
<span style="left:54px;top:700px;font-size:12.5px">5</span>
<div style="left:49px;top:738px;width:30px;height:1px;background:#6a6a6a"></div>
<span style="left:54px;top:721px;font-size:12.5px">6</span>
<div style="left:49px;top:759px;width:30px;height:1px;background:#6a6a6a"></div>
<span style="left:54px;top:742px;font-size:12.5px">7</span>
<div style="left:49px;top:780px;width:30px;height:1px;background:#6a6a6a"></div>
<span style="left:54px;top:763px;font-size:12.5px">8</span>
<div style="left:49px;top:801px;width:30px;height:1px;background:#6a6a6a"></div>
<span style="left:54px;top:784px;font-size:12.5px">9</span>
<span style="left:84.5px;top:615px;letter-spacing:-0.003px;color:#fff">2022</span>
<span style="left:172px;top:615px;letter-spacing:-0.005px;"><span class="c">广东省</span></span>
<span style="right:1204.2px;top:615px;letter-spacing:-0.127px;">373,398,651.83</span>
<span style="right:1056.2px;top:615px;letter-spacing:-0.132px;">85,050.02</span>
<span style="right:836.2px;top:615px;letter-spacing:-0.127px;">373,483,701.85</span>
<span style="right:724.2px;top:615px;letter-spacing:-0.132px;">2,396,841</span>
<span style="right:600.2px;top:615px;letter-spacing:-0.118px;">20,065,876</span>
<span style="right:488.20000000000005px;top:615px;letter-spacing:-0.097px;">0.1194</span>
<span style="left:84.5px;top:636px;letter-spacing:-0.003px;">2022</span>
<span style="left:172px;top:636px;letter-spacing:-0.005px;"><span class="c">江苏省</span></span>
<span style="right:1204.2px;top:636px;letter-spacing:-0.139px;">345,825,280.5</span>
<span style="right:1056.2px;top:636px;letter-spacing:-0.132px;">32,198.93</span>
<span style="right:836.2px;top:636px;letter-spacing:-0.127px;">345,857,479.43</span>
<span style="right:724.2px;top:636px;letter-spacing:-0.132px;">1,958,323</span>
<span style="right:600.2px;top:636px;letter-spacing:-0.118px;">20,065,876</span>
<span style="right:488.20000000000005px;top:636px;letter-spacing:-0.097px;">0.0976</span>
<span style="left:84.5px;top:657px;letter-spacing:-0.003px;">2022</span>
<span style="left:172px;top:657px;letter-spacing:-0.005px;"><span class="c">浙江省</span></span>
<span style="right:1204.2px;top:657px;letter-spacing:-0.127px;">244,442,109.02</span>
<span style="right:1056.2px;top:657px;letter-spacing:-0.132px;">27,857.55</span>
<span style="right:836.2px;top:657px;letter-spacing:-0.127px;">244,469,966.57</span>
<span style="right:724.2px;top:657px;letter-spacing:-0.132px;">1,471,158</span>
<span style="right:600.2px;top:657px;letter-spacing:-0.118px;">20,065,876</span>
<span style="right:488.20000000000005px;top:657px;letter-spacing:-0.097px;">0.0733</span>
<span style="left:84.5px;top:678px;letter-spacing:-0.003px;">2022</span>
<span style="left:172px;top:678px;letter-spacing:-0.005px;"><span class="c">山东省</span></span>
<span style="right:1204.2px;top:678px;letter-spacing:-0.127px;">236,668,449.58</span>
<span style="right:1056.2px;top:678px;letter-spacing:-0.132px;">15,047.67</span>
<span style="right:836.2px;top:678px;letter-spacing:-0.127px;">236,683,497.25</span>
<span style="right:724.2px;top:678px;letter-spacing:-0.132px;">1,497,449</span>
<span style="right:600.2px;top:678px;letter-spacing:-0.118px;">20,065,876</span>
<span style="right:488.20000000000005px;top:678px;letter-spacing:-0.097px;">0.0746</span>
<span style="left:84.5px;top:699px;letter-spacing:-0.003px;">2022</span>
<span style="left:172px;top:699px;letter-spacing:-0.005px;"><span class="c">河南省</span></span>
<span style="right:1204.2px;top:699px;letter-spacing:-0.127px;">171,192,835.49</span>
<span style="right:1056.2px;top:699px;letter-spacing:-0.132px;">18,987.18</span>
<span style="right:836.2px;top:699px;letter-spacing:-0.127px;">171,211,822.67</span>
<span style="right:724.2px;top:699px;letter-spacing:-0.132px;">1,104,623</span>
<span style="right:600.2px;top:699px;letter-spacing:-0.118px;">20,065,876</span>
<span style="right:488.20000000000005px;top:699px;letter-spacing:-0.118px;">0.055</span>
<span style="left:84.5px;top:720px;letter-spacing:-0.003px;">2022</span>
<span style="left:172px;top:720px;letter-spacing:-0.005px;"><span class="c">安徽省</span></span>
<span style="right:1204.2px;top:720px;letter-spacing:-0.127px;">159,274,515.09</span>
<span style="right:1056.2px;top:720px;letter-spacing:-0.132px;">10,252.59</span>
<span style="right:836.2px;top:720px;letter-spacing:-0.127px;">159,284,767.68</span>
<span style="right:724.2px;top:720px;letter-spacing:-0.083px;">973,680</span>
<span style="right:600.2px;top:720px;letter-spacing:-0.118px;">20,065,876</span>
<span style="right:488.20000000000005px;top:720px;letter-spacing:-0.097px;">0.0485</span>
<span style="left:84.5px;top:741px;letter-spacing:-0.003px;">2022</span>
<span style="left:172px;top:741px;letter-spacing:-0.005px;"><span class="c">四川省</span></span>
<span style="right:1204.2px;top:741px;letter-spacing:-0.127px;">155,952,410.95</span>
<span style="right:1056.2px;top:741px;letter-spacing:-0.132px;">34,469.98</span>
<span style="right:836.2px;top:741px;letter-spacing:-0.127px;">155,986,880.93</span>
<span style="right:724.2px;top:741px;letter-spacing:-0.083px;">918,580</span>
<span style="right:600.2px;top:741px;letter-spacing:-0.118px;">20,065,876</span>
<span style="right:488.20000000000005px;top:741px;letter-spacing:-0.097px;">0.0458</span>
<span style="left:84.5px;top:762px;letter-spacing:-0.003px;">2022</span>
<span style="left:172px;top:762px;letter-spacing:-0.008px;"><span class="c">上海</span></span>
<span style="right:1204.2px;top:762px;letter-spacing:-0.127px;">145,581,289.08</span>
<span style="right:1056.2px;top:762px;letter-spacing:-0.132px;">37,827.32</span>
<span style="right:836.2px;top:762px;letter-spacing:-0.139px;">145,619,116.4</span>
<span style="right:724.2px;top:762px;letter-spacing:-0.083px;">712,850</span>
<span style="right:600.2px;top:762px;letter-spacing:-0.118px;">20,065,876</span>
<span style="right:488.20000000000005px;top:762px;letter-spacing:-0.097px;">0.0355</span>
<span style="left:84.5px;top:783px;letter-spacing:-0.003px;">2022</span>
<span style="left:172px;top:783px;letter-spacing:-0.008px;"><span class="c">北京</span></span>
<span style="right:1204.2px;top:783px;letter-spacing:-0.127px;">136,043,662.33</span>
<span style="right:1056.2px;top:783px;letter-spacing:-0.132px;">41,896.72</span>
<span style="right:836.2px;top:783px;letter-spacing:-0.127px;">136,085,559.05</span>
<span style="right:724.2px;top:783px;letter-spacing:-0.083px;">681,400</span>
<span style="right:600.2px;top:783px;letter-spacing:-0.118px;">20,065,876</span>
<span style="right:488.20000000000005px;top:783px;letter-spacing:-0.118px;">0.034</span>
<div style="left:79px;top:612px;width:88px;height:22px;border:1px solid #111;background:#6db0e8"></div>
<span style="left:84.5px;top:615px;letter-spacing:-0.003px;color:#fff">2022</span>
<div style="left:1558px;top:584px;width:16px;height:218px;background:#f7f7f7"></div>
<svg style="left:1561px;top:589px;" width="9" height="6" viewBox="0 0 9 6"><path d="M0.8 5L4.5 1.2L8.2 5" fill="none" stroke="#404040" stroke-width="1.5"/></svg>
<svg style="left:1561px;top:790px;" width="9" height="6" viewBox="0 0 9 6"><path d="M0.8 1L4.5 4.8L8.2 1" fill="none" stroke="#404040" stroke-width="1.5"/></svg>
<div style="left:1558px;top:601px;width:15px;height:17px;background:#cdd1cd"></div>
<svg style="left:1580px;top:593px;" width="15" height="15" viewBox="0 0 15 15"><rect x="4.4" y="0.8" width="10" height="12" fill="#6cc6f0" stroke="#1a94d6" stroke-width="1.2"/><rect x="0.8" y="0.8" width="4" height="8" fill="#fff" stroke="#1a94d6" stroke-width="1.2"/><path d="M9 0.8V7.6H14.4" stroke="#1a94d6" stroke-width="1" fill="none"/><circle cx="3.4" cy="11.6" r="2.4" fill="#1a84d4"/><circle cx="3.4" cy="11.6" r="0.9" fill="#fff"/></svg>
<span style="left:1593px;top:609px;transform-origin:0 0;transform:rotate(90deg);font-size:12px;line-height:14px;height:14px">面板</span>
<svg style="left:1578px;top:651px;" width="15" height="14" viewBox="0 0 15 14"><rect x="0.8" y="0.8" width="13" height="12" fill="#fff" stroke="#1a94d6" stroke-width="1.2"/><path d="M1 2H14M2 4.6H13M2 6.6H13" stroke="#1a94d6" stroke-width="1.6" stroke-dasharray="1.4 1"/></svg>
<svg style="left:1577px;top:672px;" width="16" height="16" viewBox="0 0 16 16"><circle cx="8" cy="8" r="6.6" fill="#fff" stroke="#1a84d4" stroke-width="1.3"/><circle cx="5.8" cy="6.4" r="1" fill="#1a84d4"/><circle cx="10.2" cy="6.4" r="1" fill="#1a84d4"/><circle cx="5.8" cy="9.8" r="1" fill="#1a84d4"/><circle cx="10.2" cy="9.8" r="1" fill="#1a84d4"/></svg>
<svg style="left:1578px;top:694px;" width="15" height="16" viewBox="0 0 15 16"><path d="M7.4 0.4V3.6M5.8 2H9" stroke="#f08a1a" stroke-width="1.1"/><rect x="0.8" y="5" width="13" height="10" fill="#fff" stroke="#1a84d4" stroke-width="1.2"/><path d="M1 8.4H14M1 11.6H14M5.2 5V15M9.6 5V15" stroke="#1a84d4" stroke-width="1.1"/><rect x="5.2" y="5" width="4.4" height="3.4" fill="#f08a1a"/></svg>
<svg style="left:1578px;top:717px;" width="15" height="15" viewBox="0 0 15 15"><rect x="0.8" y="0.8" width="13" height="8.4" fill="#7cc8f0" stroke="#1a84d4" stroke-width="1.2"/><rect x="1.4" y="5" width="5" height="4" fill="#fff"/><path d="M1 11.4H7M1 13.6H7" stroke="#1a84d4" stroke-width="1.2"/><path d="M9.6 10V14M13.6 10V14M9.6 12H13.6" stroke="#1a84d4" stroke-width="1.1"/></svg>
<svg style="left:1578px;top:739px;" width="16" height="16" viewBox="0 0 16 16"><circle cx="3.6" cy="3.6" r="2.6" fill="#fff" stroke="#1a84d4" stroke-width="1.2"/><circle cx="11" cy="3.6" r="2.6" fill="#fff" stroke="#1a84d4" stroke-width="1.2"/><circle cx="3.6" cy="11" r="2.6" fill="#fff" stroke="#1a84d4" stroke-width="1.2"/><circle cx="11" cy="11" r="2.6" fill="#fff" stroke="#f08a1a" stroke-width="1.2"/><path d="M2.4 3.6H4.8M9.8 3.6H12.2M11 2.4V4.8M2.6 10L4.6 12M4.6 10L2.6 12M9.8 11H12.2" stroke="#1a84d4" stroke-width="0.9"/></svg>
<svg style="left:1577px;top:815px;" width="16" height="16" viewBox="0 0 16 16"><rect x="0.6" y="2" width="3.6" height="12" rx="1" fill="#1a84d4"/><path d="M7 6H11.6A2.6 2.6 0 0 1 11.6 12.6H7" fill="none" stroke="#1a84d4" stroke-width="1.6"/><path d="M9.4 2.8L6 6L9.4 9.2Z" fill="#1a84d4"/></svg>
<svg style="left:59px;top:809px;" width="16" height="16" viewBox="0 0 16 16"><path d="M2 6.4A6.2 6.2 0 0 1 12.6 3.4M14 9.6A6.2 6.2 0 0 1 3.4 12.6" fill="none" stroke="#1a94d6" stroke-width="1.5"/><path d="M14.4 1V5.4H10ZM1.6 15V10.6H6Z" fill="#1a94d6"/><path d="M5 7A3.2 3.2 0 0 1 10.4 5.6M11 9A3.2 3.2 0 0 1 5.6 10.4" fill="none" stroke="#1a94d6" stroke-width="1.2"/></svg>
<span style="left:79.5px;top:810px;letter-spacing:-0.008px;"><span class="c">刷新</span></span>
<svg style="left:118px;top:815px;" width="8" height="5" viewBox="0 0 8 5"><path d="M0 0.3H7.6L3.8 4.6Z" fill="#1a1a1a"/></svg>
<svg style="left:134px;top:810px;" width="2" height="16" viewBox="0 0 2 16"><rect x="0" y="1" width="2" height="2" fill="#b8ae9c"/><rect x="0" y="5" width="2" height="2" fill="#b8ae9c"/><rect x="0" y="9" width="2" height="2" fill="#b8ae9c"/><rect x="0" y="13" width="2" height="2" fill="#b8ae9c"/></svg>
<svg style="left:146px;top:810px;" width="15" height="15" viewBox="0 0 15 15"><circle cx="7.5" cy="7.5" r="6.6" fill="none" stroke="#b0b0b0" stroke-width="1.2"/><path d="M4.4 7.6L6.8 10L10.8 5.4" fill="none" stroke="#b0b0b0" stroke-width="1.2"/></svg>
<span style="left:166px;top:810px;letter-spacing:-0.008px;color:#a8a8a8"><span class="c">保存</span></span>
<svg style="left:204px;top:815px;" width="8" height="5" viewBox="0 0 8 5"><path d="M0 0.3H7.6L3.8 4.6Z" fill="#6e6e6e"/></svg>
<svg style="left:221px;top:811px;" width="13" height="13" viewBox="0 0 13 13"><rect x="0.6" y="0.6" width="11.6" height="11.6" fill="none" stroke="#b0b0b0" stroke-width="1.1"/><path d="M3.4 3.4L9.4 9.4M9.4 3.4L3.4 9.4" stroke="#b0b0b0" stroke-width="1.1"/></svg>
<span style="left:239px;top:810px;letter-spacing:-0.008px;color:#a8a8a8"><span class="c">取消</span></span>
<div style="left:273px;top:804px;width:1px;height:27px;background:#6a6a6a"></div>
<svg style="left:284px;top:810px;" width="16" height="15" viewBox="0 0 16 15"><path d="M0 2H14M0 7H10M0 12H6" stroke="#1a8cd8" stroke-width="1.7"/><path d="M8.4 13.6L14.4 8.2" stroke="#1a8cd8" stroke-width="2"/></svg>
<svg style="left:308px;top:810px;" width="16" height="15" viewBox="0 0 16 15"><path d="M0 2H14M0 7H6M0 12H6" stroke="#9a9a9a" stroke-width="1.6"/><path d="M7.6 9.6H15.2M11.4 5.8V13.4" stroke="#9a9a9a" stroke-width="1.6"/></svg>
<svg style="left:332px;top:810px;" width="16" height="15" viewBox="0 0 16 15"><path d="M0 2H14" stroke="#9a9a9a" stroke-width="1.4"/><path d="M0 7H3M0 12H3" stroke="#9a9a9a" stroke-width="1.6"/><path d="M6.4 5.4C4.8 7.4 4.8 11.6 6.4 13.6M12.6 5.4C14.2 7.4 14.2 11.6 12.6 13.6M7.2 9.5H11.8M9.5 7.2V11.8" fill="none" stroke="#9a9a9a" stroke-width="1.1"/></svg>
<svg style="left:356px;top:810px;" width="16" height="15" viewBox="0 0 16 15"><path d="M0 2H14M0 7H6M0 12H6" stroke="#9a9a9a" stroke-width="1.6"/><path d="M8 9.6H15.2" stroke="#9a9a9a" stroke-width="1.6"/></svg>
<svg style="left:379px;top:810px;" width="2" height="16" viewBox="0 0 2 16"><rect x="0" y="1" width="2" height="2" fill="#b8ae9c"/><rect x="0" y="5" width="2" height="2" fill="#b8ae9c"/><rect x="0" y="9" width="2" height="2" fill="#b8ae9c"/><rect x="0" y="13" width="2" height="2" fill="#b8ae9c"/></svg>
<svg style="left:388px;top:810px;" width="12" height="15" viewBox="0 0 12 15"><path d="M1 0.6V14.4" stroke="#8e8e8e" stroke-width="1.7"/><path d="M10.6 1L4 7.5L10.6 14" fill="none" stroke="#8e8e8e" stroke-width="1.7"/></svg>
<svg style="left:412px;top:810px;" width="10" height="15" viewBox="0 0 10 15"><path d="M8.4 1L1.8 7.5L8.4 14" fill="none" stroke="#8e8e8e" stroke-width="1.7"/></svg>
<svg style="left:437px;top:810px;" width="10" height="15" viewBox="0 0 10 15"><path d="M1.6 1L8.2 7.5L1.6 14" fill="none" stroke="#1a8cd8" stroke-width="1.8"/></svg>
<svg style="left:458px;top:810px;" width="12" height="15" viewBox="0 0 12 15"><path d="M1.4 1L8 7.5L1.4 14" fill="none" stroke="#1a8cd8" stroke-width="1.8"/><path d="M11 0.6V14.4" stroke="#1a8cd8" stroke-width="1.8"/></svg>
<svg style="left:479px;top:810px;" width="15" height="15" viewBox="0 0 15 15"><path d="M0.6 4V0.6H4M10.6 0.6H14.4V4M14.4 10.6V14.4H10.6M4 14.4H0.6V10.6" fill="none" stroke="#9a9a9a" stroke-width="1.2"/><path d="M4.6 3.8H8.4L10.4 5.8V11H4.6Z" fill="none" stroke="#9a9a9a" stroke-width="1.1"/></svg>
<svg style="left:502px;top:810px;" width="2" height="16" viewBox="0 0 2 16"><rect x="0" y="1" width="2" height="2" fill="#b8ae9c"/><rect x="0" y="5" width="2" height="2" fill="#b8ae9c"/><rect x="0" y="9" width="2" height="2" fill="#b8ae9c"/><rect x="0" y="13" width="2" height="2" fill="#b8ae9c"/></svg>
<svg style="left:517px;top:809px;" width="14" height="16" viewBox="0 0 14 16"><path d="M7 11.4V1.6M3.4 5L7 1.4L10.6 5" fill="none" stroke="#1a8cd8" stroke-width="1.5"/><path d="M1 9.6V14.6H13V9.6" fill="none" stroke="#1a8cd8" stroke-width="1.3"/></svg>
<span style="left:536px;top:810px;letter-spacing:-0.134px;"><span class="c">导出数据</span>...</span>
<svg style="left:608px;top:816px;" width="8" height="5" viewBox="0 0 8 5"><path d="M0 0.3H7.6L3.8 4.6Z" fill="#1a1a1a"/></svg>
<svg style="left:624px;top:810px;" width="2" height="16" viewBox="0 0 2 16"><rect x="0" y="1" width="2" height="2" fill="#b8ae9c"/><rect x="0" y="5" width="2" height="2" fill="#b8ae9c"/><rect x="0" y="9" width="2" height="2" fill="#b8ae9c"/><rect x="0" y="13" width="2" height="2" fill="#b8ae9c"/></svg>
<svg style="left:631px;top:809px;" width="16" height="16" viewBox="0 0 16 16"><g transform="translate(8 8)"><rect x="-1.7" y="-7.4" width="3.4" height="4" rx="0.6" transform="rotate(0)" fill="#1a8cd8"/><rect x="-1.7" y="-7.4" width="3.4" height="4" rx="0.6" transform="rotate(45)" fill="#1a8cd8"/><rect x="-1.7" y="-7.4" width="3.4" height="4" rx="0.6" transform="rotate(90)" fill="#1a8cd8"/><rect x="-1.7" y="-7.4" width="3.4" height="4" rx="0.6" transform="rotate(135)" fill="#1a8cd8"/><rect x="-1.7" y="-7.4" width="3.4" height="4" rx="0.6" transform="rotate(180)" fill="#1a8cd8"/><rect x="-1.7" y="-7.4" width="3.4" height="4" rx="0.6" transform="rotate(225)" fill="#1a8cd8"/><rect x="-1.7" y="-7.4" width="3.4" height="4" rx="0.6" transform="rotate(270)" fill="#1a8cd8"/><rect x="-1.7" y="-7.4" width="3.4" height="4" rx="0.6" transform="rotate(315)" fill="#1a8cd8"/><circle r="5.4" fill="#1a8cd8"/><circle r="2.3" fill="#f7f7f7"/></g></svg>
<div style="left:654px;top:806px;width:54px;height:23px;background:#fff;border:1px solid #7a7a7a"></div>
<span style="left:658.5px;top:809px;letter-spacing:-0.086px;">200</span>
<svg style="left:714px;top:809px;" width="16" height="16" viewBox="0 0 16 16"><path d="M3.6 1.6L8 6L12.4 1.6M8 6V11" fill="none" stroke="#1a8cd8" stroke-width="1.3"/><path d="M1.4 1.6H4M12 1.6H14.6" stroke="#1a8cd8" stroke-width="1.3"/><path d="M1 10.4V14.6H15V10.4" fill="none" stroke="#1a8cd8" stroke-width="1.3"/></svg>
<span style="left:737.5px;top:809px;letter-spacing:-0.086px;">176</span>
<svg style="left:765px;top:810px;" width="2" height="16" viewBox="0 0 2 16"><rect x="0" y="1" width="2" height="2" fill="#b8ae9c"/><rect x="0" y="5" width="2" height="2" fill="#b8ae9c"/><rect x="0" y="9" width="2" height="2" fill="#b8ae9c"/><rect x="0" y="13" width="2" height="2" fill="#b8ae9c"/></svg>
<svg style="left:793px;top:815px;" width="10" height="3" viewBox="0 0 10 3"><rect x="0" y="0.6" width="1.4" height="1.4" fill="#8a8a8a"/><rect x="4" y="0.6" width="1.4" height="1.4" fill="#8a8a8a"/><rect x="8" y="0.6" width="1.4" height="1.4" fill="#8a8a8a"/></svg>
<span style="left:812.5px;top:809px;letter-spacing:0.096px;">176 <span class="c">行已获取</span> - 11.297s (3ms <span class="c">获取</span>), 2025-10-21 20:14:58</span>
<div style="left:778px;top:835px;width:1px;height:22px;background:#a6a6a6"></div>
<div style="left:814px;top:835px;width:1px;height:22px;background:#a6a6a6"></div>
<div style="left:841px;top:835px;width:1px;height:22px;background:#a6a6a6"></div>
<div style="left:975px;top:835px;width:1px;height:22px;background:#a6a6a6"></div>
<div style="left:1103px;top:835px;width:1px;height:22px;background:#a6a6a6"></div>
<div style="left:1231px;top:835px;width:1px;height:22px;background:#a6a6a6"></div>
<span style="left:786px;top:837px;letter-spacing:-1.167px;">CST</span>
<span style="left:822px;top:837px;letter-spacing:-0.102px;">zh</span>
<span style="left:849px;top:837px;letter-spacing:-0.008px;"><span class="c">可写</span></span>
<span style="left:983px;top:837px;letter-spacing:-0.004px;"><span class="c">智能插入</span></span>
<span style="left:1111px;top:837px;letter-spacing:0.073px;">959 : 1 : 39421</span>
<span style="left:1239px;top:837px;letter-spacing:0.039px;">Sel: 0 | 0</span>
<svg style="left:1315px;top:841px;" width="2" height="16" viewBox="0 0 2 16"><rect x="0" y="1" width="2" height="2" fill="#b8ae9c"/><rect x="0" y="5" width="2" height="2" fill="#b8ae9c"/><rect x="0" y="9" width="2" height="2" fill="#b8ae9c"/><rect x="0" y="13" width="2" height="2" fill="#b8ae9c"/></svg>
<div style="left:0px;top:860px;width:1600px;height:40px;background:#000"></div>
<div style="left:294px;top:860px;width:48px;height:40px;background:#333"></div>
<div style="left:294px;top:898px;width:48px;height:2px;background:#76b9ed"></div>
<svg style="left:16px;top:872px;" width="17" height="17" viewBox="0 0 17 17"><path d="M0 2.4L7 1.4V8H0ZM8 1.2L16.4 0V8H8ZM0 9H7V15.6L0 14.6ZM8 9H16.4V17L8 15.8Z" fill="#fff"/></svg>
<svg style="left:62px;top:870px;" width="22" height="20" viewBox="0 0 22 20"><circle cx="13.4" cy="7.4" r="5.6" fill="none" stroke="#fff" stroke-width="1.3"/><path d="M9.4 11.4L2 18.6" stroke="#fff" stroke-width="1.5"/></svg>
<svg style="left:111px;top:871px;" width="18" height="18" viewBox="0 0 18 18"><rect x="2.6" y="5" width="9.4" height="7.4" fill="none" stroke="#fff" stroke-width="1.3"/><path d="M0.6 1.4H12.6M0.6 16H12.6M1.2 1.4V3.4M12 1.4V3.4M1.2 16V14M12 16V14" fill="none" stroke="#fff" stroke-width="1.2"/><path d="M15.6 1.4V4M15.6 6.4V9M15.6 11.4V16" stroke="#fff" stroke-width="1.4"/></svg>
<svg style="left:158px;top:866px;" width="26" height="26" viewBox="0 0 26 26"><defs><linearGradient id="ieg" x1="0" y1="0" x2="0" y2="1"><stop offset="0" stop-color="#7fd3f7"/><stop offset="1" stop-color="#1e9be6"/></linearGradient></defs><path d="M4.4 15.4H23.6C24.2 9 20 4.4 14 4.4C8.2 4.4 4 8.6 4 14.2C4 20 8.2 24 14 24C18.4 24 21.8 21.8 23.2 18.2H18C17.2 19.4 15.8 20 14 20C11.2 20 9.4 18.2 9 15.4M9 12.2C9.6 9.8 11.4 8.4 14 8.4C16.4 8.4 18.2 9.8 18.6 12.2Z" fill="url(#ieg)" fill-rule="evenodd"/><path d="M4.2 23.4C0.4 21.4 2.4 13.4 9.4 7.6C15.4 2.6 22.2 1 23.8 3.6C24.6 5 24 7 22.8 9" fill="none" stroke="#f4c61c" stroke-width="2.3"/></svg>
<svg style="left:208px;top:870px;" width="24" height="20" viewBox="0 0 24 20"><path d="M1.6 1.8C1.6 1.2 2 0.8 2.6 0.8H9L10.6 2.4H21.6C22.2 2.4 22.6 2.8 22.6 3.4V17.6H1.6Z" fill="#f3cf62"/><path d="M1.6 3.6H22.6V17.8H1.6Z" fill="#fbe39c"/><path d="M5.4 18.8V11H18.6V18.8H15.2V14H8.8V18.8Z" fill="#2c9cec"/><path d="M2.6 1.6H6.6" stroke="#fff6d0" stroke-width="0.8"/></svg>
<svg style="left:257px;top:868px;" width="24" height="24" viewBox="0 0 24 24"><circle cx="12" cy="12" r="10.9" fill="#fdfdfd" stroke="#4bb3b4" stroke-width="1.9"/><path d="M7.6 21.4C7.8 17.6 9.4 15 12 13.6C13.2 13 14.4 12.2 15.2 11.2L16.4 13.2L15.8 17L17.2 16.6L17.8 12.6L19.2 11.6C19.6 14.6 19 18.6 17.6 21.4C14.6 23 10.4 23 7.6 21.4Z" fill="#2c2624"/><path d="M15.4 6.6C16.6 6 18.2 6.2 18.8 7.2C18.6 8.4 17.4 9.2 16.2 9C15.4 8.4 15.2 7.4 15.4 6.6Z" fill="#2c2624"/><path d="M16.4 9.2C15.4 10.4 14 11.2 12.6 11.8" fill="none" stroke="#2c2624" stroke-width="0.9"/><circle cx="13.2" cy="6.9" r="0.8" fill="#2c2624"/><path d="M5 10.4C6.4 6.6 9.6 4.4 13 4.6M6 13.4C6.6 10 8.6 7.6 11 6.8" fill="none" stroke="#b9b4b0" stroke-width="0.9"/></svg>
<svg style="left:306px;top:868px;" width="24" height="24" viewBox="0 0 24 24"><circle cx="12" cy="12" r="10.9" fill="#fdfdfd" stroke="#4bb3b4" stroke-width="1.9"/><path d="M7.6 21.4C7.8 17.6 9.4 15 12 13.6C13.2 13 14.4 12.2 15.2 11.2L16.4 13.2L15.8 17L17.2 16.6L17.8 12.6L19.2 11.6C19.6 14.6 19 18.6 17.6 21.4C14.6 23 10.4 23 7.6 21.4Z" fill="#2c2624"/><path d="M15.4 6.6C16.6 6 18.2 6.2 18.8 7.2C18.6 8.4 17.4 9.2 16.2 9C15.4 8.4 15.2 7.4 15.4 6.6Z" fill="#2c2624"/><path d="M16.4 9.2C15.4 10.4 14 11.2 12.6 11.8" fill="none" stroke="#2c2624" stroke-width="0.9"/><circle cx="13.2" cy="6.9" r="0.8" fill="#2c2624"/><path d="M5 10.4C6.4 6.6 9.6 4.4 13 4.6M6 13.4C6.6 10 8.6 7.6 11 6.8" fill="none" stroke="#b9b4b0" stroke-width="0.9"/></svg>
<svg style="left:1347px;top:875px;" width="14" height="9" viewBox="0 0 14 9"><path d="M1 8L7 1.6L13 8" fill="none" stroke="#fff" stroke-width="1.3"/></svg>
<svg style="left:1371px;top:871px;" width="18" height="18" viewBox="0 0 18 18"><path d="M3.4 1H8.6V5H3.4ZM2 5H10V16H2Z" fill="none" stroke="#fff" stroke-width="1.1"/><path d="M5 2.4V3.6M7 2.4V3.6" stroke="#fff" stroke-width="0.9"/><path d="M8.6 14.4L10.8 16.6L15 12" fill="none" stroke="#fff" stroke-width="1"/></svg>
<svg style="left:1393px;top:873px;" width="18" height="15" viewBox="0 0 18 15"><rect x="4.4" y="1" width="12.6" height="9" fill="#000" stroke="#fff" stroke-width="1.1"/><path d="M10.6 10V13.4M7 13.6H14.4" stroke="#fff" stroke-width="1.1"/><rect x="0.8" y="1" width="4.4" height="4" fill="#000" stroke="#fff" stroke-width="1"/><path d="M3 5V13.6H7" fill="none" stroke="#fff" stroke-width="1"/></svg>
<svg style="left:1417px;top:872px;" width="18" height="16" viewBox="0 0 18 16"><path d="M1 5.4H3.6L7 2V14L3.6 10.6H1Z" fill="none" stroke="#fff" stroke-width="1.1"/><path d="M9.4 5.4C10.6 6.8 10.6 9.2 9.4 10.6M11.6 3.6C13.6 6 13.6 10 11.6 12.4M13.8 1.8C16.6 5.4 16.6 10.6 13.8 14.2" fill="none" stroke="#fff" stroke-width="1.1"/></svg>
<span style="left:1443.5px;top:872px;letter-spacing:-0.531px;color:#fff">ENG</span>
<span style="left:1495px;top:863px;letter-spacing:-0.056px;color:#fff">20:15</span>
<span style="left:1477px;top:881.5px;letter-spacing:0.244px;color:#fff">2025/10/21</span>
<svg style="left:1558px;top:871px;" width="18" height="19" viewBox="0 0 18 19"><path d="M1 1H16.4V13.4H10.4L8.6 15.6L6.8 13.4H1Z" fill="none" stroke="#fff" stroke-width="1.2"/></svg>
<div style="left:1595px;top:860px;width:1px;height:40px;background:#5a5a5a"></div>
<div style="left:0;top:0;width:1600px;height:860px;overflow:hidden;pointer-events:none">
<div class="wm" style="left:28px;top:134.5px"><p style="letter-spacing:0.3px">audit审计01(Audit1)</p><p style="letter-spacing:0.05px">audit-172.18.210.237</p></div>
<div class="wm" style="left:328px;top:134.5px"><p style="letter-spacing:0.3px">audit审计01(Audit1)</p><p style="letter-spacing:0.05px">audit-172.18.210.237</p></div>
<div class="wm" style="left:628px;top:134.5px"><p style="letter-spacing:0.3px">audit审计01(Audit1)</p><p style="letter-spacing:0.05px">audit-172.18.210.237</p></div>
<div class="wm" style="left:928px;top:134.5px"><p style="letter-spacing:0.3px">audit审计01(Audit1)</p><p style="letter-spacing:0.05px">audit-172.18.210.237</p></div>
<div class="wm" style="left:1228px;top:134.5px"><p style="letter-spacing:0.3px">audit审计01(Audit1)</p><p style="letter-spacing:0.05px">audit-172.18.210.237</p></div>
<div class="wm" style="left:1528px;top:134.5px"><p style="letter-spacing:0.3px">audit审计01(Audit1)</p><p style="letter-spacing:0.05px">audit-172.18.210.237</p></div>
<div class="wm" style="left:28px;top:434.5px"><p style="letter-spacing:0.3px">audit审计01(Audit1)</p><p style="letter-spacing:0.05px">audit-172.18.210.237</p></div>
<div class="wm" style="left:328px;top:434.5px"><p style="letter-spacing:0.3px">audit审计01(Audit1)</p><p style="letter-spacing:0.05px">audit-172.18.210.237</p></div>
<div class="wm" style="left:628px;top:434.5px"><p style="letter-spacing:0.3px">audit审计01(Audit1)</p><p style="letter-spacing:0.05px">audit-172.18.210.237</p></div>
<div class="wm" style="left:928px;top:434.5px"><p style="letter-spacing:0.3px">audit审计01(Audit1)</p><p style="letter-spacing:0.05px">audit-172.18.210.237</p></div>
<div class="wm" style="left:1228px;top:434.5px"><p style="letter-spacing:0.3px">audit审计01(Audit1)</p><p style="letter-spacing:0.05px">audit-172.18.210.237</p></div>
<div class="wm" style="left:1528px;top:434.5px"><p style="letter-spacing:0.3px">audit审计01(Audit1)</p><p style="letter-spacing:0.05px">audit-172.18.210.237</p></div>
<div class="wm" style="left:28px;top:734.5px"><p style="letter-spacing:0.3px">audit审计01(Audit1)</p><p style="letter-spacing:0.05px">audit-172.18.210.237</p></div>
<div class="wm" style="left:328px;top:734.5px"><p style="letter-spacing:0.3px">audit审计01(Audit1)</p><p style="letter-spacing:0.05px">audit-172.18.210.237</p></div>
<div class="wm" style="left:628px;top:734.5px"><p style="letter-spacing:0.3px">audit审计01(Audit1)</p><p style="letter-spacing:0.05px">audit-172.18.210.237</p></div>
<div class="wm" style="left:928px;top:734.5px"><p style="letter-spacing:0.3px">audit审计01(Audit1)</p><p style="letter-spacing:0.05px">audit-172.18.210.237</p></div>
<div class="wm" style="left:1228px;top:734.5px"><p style="letter-spacing:0.3px">audit审计01(Audit1)</p><p style="letter-spacing:0.05px">audit-172.18.210.237</p></div>
<div class="wm" style="left:1528px;top:734.5px"><p style="letter-spacing:0.3px">audit审计01(Audit1)</p><p style="letter-spacing:0.05px">audit-172.18.210.237</p></div>
</div>
</div></body></html>
